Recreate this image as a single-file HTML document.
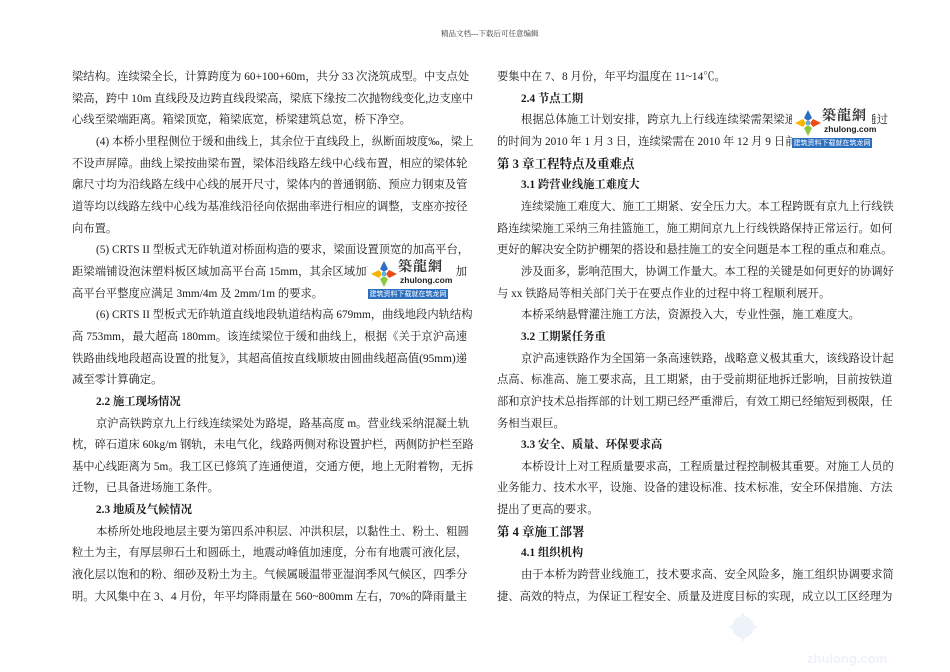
<!DOCTYPE html>
<html><head><meta charset="utf-8"><style>
body{margin:0;background:#fff;width:950px;height:672px;overflow:hidden;position:relative;font-family:"Liberation Serif","Noto Serif CJK SC","Noto Sans CJK SC",serif;color:#1a1a1a;}
.col{position:absolute;top:67px;font-size:11.3px;line-height:21.65px;}
.l{text-align:justify;text-align-last:justify;white-space:nowrap;}
.n{text-align:left;text-align-last:left;}
.i{padding-left:24px;}
.h{font-weight:bold;}
.c{font-weight:bold;font-size:12.5px;}
.hdr{position:absolute;top:28px;left:441px;font-size:7.5px;color:#333;}
.logo{position:absolute;width:80px;height:42px;background:#fff;}
.logo .t{position:absolute;left:30px;top:0;font-size:14px;font-weight:bold;color:#333;font-family:"Noto Serif CJK SC",serif;letter-spacing:1px;line-height:17px;}
.logo .u{position:absolute;left:32px;top:17px;font-size:8.5px;font-weight:bold;color:#222;font-family:"Liberation Sans",sans-serif;}
.logo .b{position:absolute;left:0;top:31px;width:80px;height:10px;background:#2a6fc0;color:#fff;font-size:7px;line-height:10px;text-align:center;font-family:"Noto Sans CJK SC",sans-serif;white-space:nowrap;overflow:hidden;}
.logo svg{position:absolute;left:2px;top:2px;}
</style></head><body>
<div class="hdr">精品文档---下载后可任意编辑</div>

<div class="col" style="left:72px;width:395px;">
<div class="l">梁结构。连续梁全长，计算跨度为 60+100+60m，共分 33 次浇筑成型。中支点处</div>
<div class="l">梁高，跨中 10m 直线段及边跨直线段梁高，梁底下缘按二次抛物线变化,边支座中</div>
<div class="l n">心线至梁端距离。箱梁顶宽，箱梁底宽，桥梁建筑总宽，桥下净空。</div>
<div class="l i">(4) 本桥小里程侧位于缓和曲线上，其余位于直线段上，纵断面坡度‰，梁上</div>
<div class="l">不设声屏障。曲线上梁按曲梁布置，梁体沿线路左线中心线布置，相应的梁体轮</div>
<div class="l">廓尺寸均为沿线路左线中心线的展开尺寸，梁体内的普通钢筋、预应力钢束及管</div>
<div class="l">道等均以线路左线中心线为基准线沿径向依据曲率进行相应的调整，支座亦按径</div>
<div class="l n">向布置。</div>
<div class="l i">(5) CRTS II 型板式无砟轨道对桥面构造的要求，梁面设置顶宽的加高平台，</div>
<div class="l">距梁端铺设泡沫塑料板区域加高平台高 15mm，其余区域加高平台高 20mm，加</div>
<div class="l n">高平台平整度应满足 3mm/4m 及 2mm/1m 的要求。</div>
<div class="l i">(6) CRTS II 型板式无砟轨道直线地段轨道结构高 679mm，曲线地段内轨结构</div>
<div class="l">高 753mm，最大超高 180mm。该连续梁位于缓和曲线上，根据《关于京沪高速</div>
<div class="l">铁路曲线地段超高设置的批复》，其超高值按直线顺坡由圆曲线超高值(95mm)递</div>
<div class="l n">减至零计算确定。</div>
<div class="l n i h">2.2 施工现场情况</div>
<div class="l i">京沪高铁跨京九上行线连续梁处为路堤，路基高度 m。营业线采纳混凝土轨</div>
<div class="l">枕，碎石道床 60kg/m 钢轨，未电气化，线路两侧对称设置护栏，两侧防护栏至路</div>
<div class="l">基中心线距离为 5m。我工区已修筑了连通便道，交通方便，地上无附着物，无拆</div>
<div class="l n">迁物，已具备进场施工条件。</div>
<div class="l n i h">2.3 地质及气候情况</div>
<div class="l i">本桥所处地段地层主要为第四系冲积层、冲洪积层，以黏性土、粉土、粗圆</div>
<div class="l">粒土为主，有厚层卵石土和圆砾土，地震动峰值加速度，分布有地震可液化层，</div>
<div class="l">液化层以饱和的粉、细砂及粉土为主。气候属暖温带亚湿润季风气候区，四季分</div>
<div class="l">明。大风集中在 3、4 月份，年平均降雨量在 560~800mm 左右，70%的降雨量主</div>
</div>

<div class="col" style="left:497px;width:391px;">
<div class="l n">要集中在 7、8 月份，年平均温度在 11~14℃。</div>
<div class="l n i h">2.4 节点工期</div>
<div class="l i">根据总体施工计划安排，跨京九上行线连续梁需架梁通过的时间为梁通过</div>
<div class="l n">的时间为 2010 年 1 月 3 日，连续梁需在 2010 年 12 月 9 日前完成合拢。</div>
<div class="l n c">第 3 章工程特点及重难点</div>
<div class="l n i h">3.1 跨营业线施工难度大</div>
<div class="l i">连续梁施工难度大、施工工期紧、安全压力大。本工程跨既有京九上行线铁</div>
<div class="l">路连续梁施工采纳三角挂篮施工，施工期间京九上行线铁路保持正常运行。如何</div>
<div class="l">更好的解决安全防护棚架的搭设和悬挂施工的安全问题是本工程的重点和难点。</div>
<div class="l i">涉及面多，影响范围大，协调工作量大。本工程的关键是如何更好的协调好</div>
<div class="l n">与 xx 铁路局等相关部门关于在要点作业的过程中将工程顺利展开。</div>
<div class="l n i">本桥采纳悬臂灌注施工方法，资源投入大，专业性强，施工难度大。</div>
<div class="l n i h">3.2 工期紧任务重</div>
<div class="l i">京沪高速铁路作为全国第一条高速铁路，战略意义极其重大，该线路设计起</div>
<div class="l">点高、标准高、施工要求高，且工期紧，由于受前期征地拆迁影响，目前按铁道</div>
<div class="l">部和京沪技术总指挥部的计划工期已经严重滞后，有效工期已经缩短到极限，任</div>
<div class="l n">务相当艰巨。</div>
<div class="l n i h">3.3 安全、质量、环保要求高</div>
<div class="l i">本桥设计上对工程质量要求高，工程质量过程控制极其重要。对施工人员的</div>
<div class="l">业务能力、技术水平，设施、设备的建设标准、技术标准，安全环保措施、方法</div>
<div class="l n">提出了更高的要求。</div>
<div class="l n c">第 4 章施工部署</div>
<div class="l n i h">4.1 组织机构</div>
<div class="l i">由于本桥为跨营业线施工，技术要求高、安全风险多，施工组织协调要求简</div>
<div class="l">捷、高效的特点，为保证工程安全、质量及进度目标的实现，成立以工区经理为</div>
</div>

<div class="logo" style="left:368px;top:258px;">
<svg width="28" height="28" viewBox="0 0 28 28"><path d="M14 1 L18 9 L14 12 L10 9Z" fill="#2a6fc0"/><path d="M27 14 L19 18 L16 14 L19 10Z" fill="#e94e1b"/><path d="M14 27 L10 19 L14 16 L18 19Z" fill="#8dc63f"/><path d="M1 14 L9 10 L12 14 L9 18Z" fill="#f7b500"/><rect x="12" y="12" width="4" height="4" fill="#5bb3e6"/></svg>
<div class="t">築龍網</div><div class="u">zhulong.com</div><div class="b">建筑资料下载就在筑龙网</div></div>

<div class="logo" style="left:792px;top:107px;">
<svg width="28" height="28" viewBox="0 0 28 28"><path d="M14 1 L18 9 L14 12 L10 9Z" fill="#2a6fc0"/><path d="M27 14 L19 18 L16 14 L19 10Z" fill="#e94e1b"/><path d="M14 27 L10 19 L14 16 L18 19Z" fill="#8dc63f"/><path d="M1 14 L9 10 L12 14 L9 18Z" fill="#f7b500"/><rect x="12" y="12" width="4" height="4" fill="#5bb3e6"/></svg>
<div class="t">築龍網</div><div class="u">zhulong.com</div><div class="b">建筑资料下载就在筑龙网</div></div>

<svg style="position:absolute;left:727px;top:611px" width="32" height="32" viewBox="0 0 32 32"><circle cx="16" cy="16" r="11" fill="#eef3fa"/><path d="M16 1 L21 11 L31 16 L21 21 L16 31 L11 21 L1 16 L11 11Z" fill="#eef3fa"/></svg>
<div style="position:absolute;left:807px;top:651px;font-family:'Liberation Sans',sans-serif;font-weight:bold;font-size:13px;color:#eef2f8;">zhulong.com</div>
</body></html>
